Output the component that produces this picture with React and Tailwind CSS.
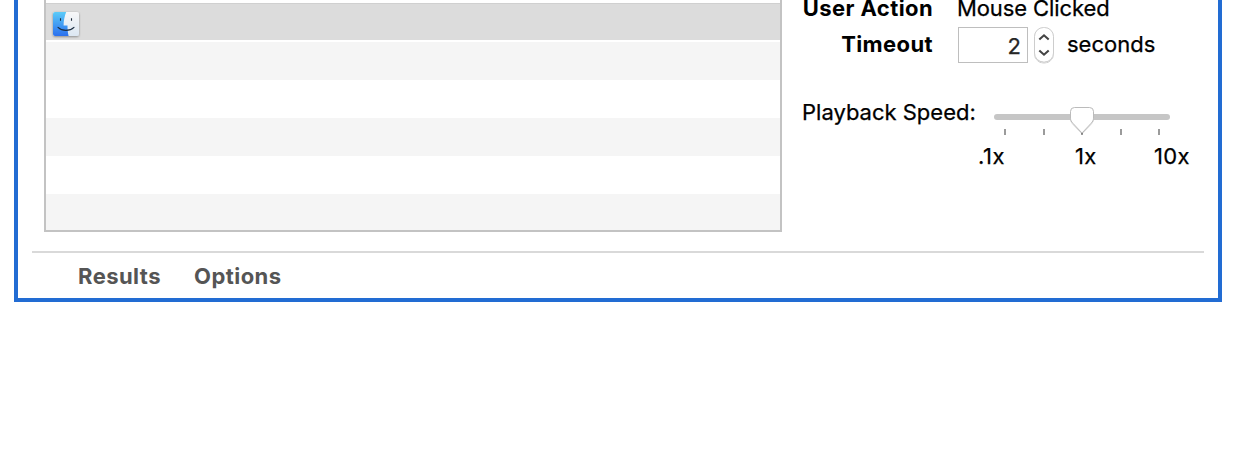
function FinderIcon() {
  return (
    <svg className="block h-[30px] w-[30px]" viewBox="0 0 30 30">
      <defs>
        <linearGradient id="finderBlue" x1="0" y1="0" x2="0" y2="1">
          <stop offset="0" stopColor="#5bcbf8" />
          <stop offset="1" stopColor="#2b70ee" />
        </linearGradient>
        <linearGradient id="finderLight" x1="0" y1="0" x2="0" y2="1">
          <stop offset="0" stopColor="#f7f7f8" />
          <stop offset="1" stopColor="#dce7f2" />
        </linearGradient>
        <filter id="finderShadow" x="-20%" y="-20%" width="140%" height="140%">
          <feDropShadow dx="0" dy="0.8" stdDeviation="0.8" floodOpacity="0.4" />
        </filter>
      </defs>
      <rect x="2" y="2" width="26" height="24" rx="2" fill="url(#finderLight)" filter="url(#finderShadow)" />
      <path d="M15.2 2C13.6 6 12.6 10.5 12.6 15.6H16.5C16.5 19.5 16.8 23 17.6 26H4a2 2 0 0 1-2-2V4a2 2 0 0 1 2-2Z" fill="url(#finderBlue)" />
      <path d="M9.5 8.2v2.6M20.5 8.2v2.6" stroke="#1d2b3a" strokeWidth="1.1" fill="none" />
      <path d="M7 17.3C11.3 21.4 18.7 21.4 23 17.3" stroke="#1a2c40" strokeWidth="1.1" strokeLinecap="round" fill="none" />
    </svg>
  );
}

function Stepper() {
  return (
    <svg className="ml-[3px] block h-[40px] w-[26px]" viewBox="0 0 26 40">
      <defs>
        <filter id="stepShadow" x="-20%" y="-20%" width="140%" height="140%">
          <feDropShadow dx="0" dy="0.8" stdDeviation="0.6" floodOpacity="0.25" />
        </filter>
      </defs>
      <rect x="3.5" y="1.5" width="19" height="34.5" rx="9" fill="#fff" stroke="#cdcdcd" filter="url(#stepShadow)" />
      <path d="M8.3 13.6 13 9.3l4.7 4.3M8.3 24.4l4.7 4.3 4.7-4.3" fill="none" stroke="#444" strokeWidth="2.1" />
    </svg>
  );
}

function Slider() {
  return (
    <svg className="block h-[34px] w-[180px]" viewBox="0 0 180 34">
      <defs>
        <filter id="thumbShadow" x="-20%" y="-20%" width="140%" height="140%">
          <feDropShadow dx="0" dy="0.6" stdDeviation="0.5" floodOpacity="0.25" />
        </filter>
      </defs>
      <rect x="2" y="12" width="176" height="6" rx="3" fill="#c6c6c6" />
      <path d="M13 27v6M52 27v6M90 27v6M129 27v6M167 27v6" stroke="#9b9b9b" strokeWidth="2" />
      <path d="M78.5 9.5a4 4 0 0 1 4-4h15a4 4 0 0 1 4 4v6.8c0 2-1 3.4-2.3 4.9L90 31l-9.2-9.8c-1.3-1.5-2.3-2.9-2.3-4.9Z" fill="#fff" stroke="#bbb" filter="url(#thumbShadow)" />
    </svg>
  );
}

export default function App() {
  return (
    <div className="h-[460px] w-[1236px] overflow-hidden bg-white px-[14px] font-['Inter',sans-serif] text-[22px] leading-[28px] text-black">
      <div className="flex h-[302px] flex-col border-x-4 border-b-4 border-[#226cd3] px-[14px]">
        <div className="flex h-[251px] shrink-0 pl-3">
          <div className="h-[232px] w-[738px] shrink-0 border-x-2 border-b-2 border-[#c3c3c3]">
            <div className="h-[3px]" />
            <div className="flex h-[37px] items-start border-t border-[#d0d0d0] bg-[#dcdcdc] pl-[5px] pt-[6px]">
              <FinderIcon />
            </div>
            <div className="h-[2px] bg-white" />
            <div className="h-[38px] bg-[#f5f5f5]" />
            <div className="h-[38px]" />
            <div className="h-[38px] bg-[#f5f5f5]" />
            <div className="h-[38px]" />
            <div className="h-[36px] bg-[#f5f5f5]" />
          </div>
          <div className="flex w-[422px] flex-col pl-5 whitespace-nowrap">
            <div className="flex h-[22px] font-medium leading-[16px]">
              <span className="w-[131px] text-right font-bold tracking-[0.4px]">User Action</span>
              <span className="ml-[24px] font-normal tracking-[-0.1px] [-webkit-text-stroke:0.25px_black]">Mouse Clicked</span>
            </div>
            <div className="mt-1 flex h-[40px]">
              <span className="w-[131px] pt-1 text-right font-bold tracking-[0.4px]">Timeout</span>
              <div className="ml-[25px] mt-px h-[36px] w-[70px] border border-[#bebebe] pr-[6px] pt-[4px] text-right text-[#262626] [-webkit-text-stroke:0.25px_#262626]">2</div>
              <Stepper />
              <span className="ml-[10px] pt-1 [-webkit-text-stroke:0.25px_black]">seconds</span>
            </div>
            <div className="mt-[32px] flex h-[44px]">
              <span className="w-[190px] [-webkit-text-stroke:0.25px_black]">Playback Speed:</span>
              <div className="pt-[4px]">
                <Slider />
              </div>
            </div>
            <div className="flex h-[28px] [-webkit-text-stroke:0.25px_black]">
              <span className="ml-[176px] w-[97px] tracking-[0.5px]">.1x</span>
              <span className="w-[79px] tracking-[0.3px]">1x</span>
              <span className="tracking-[0.3px]">10x</span>
            </div>
          </div>
        </div>
        <div className="h-[2px] shrink-0 bg-[#d9d9d9]" />
        <div className="flex pl-[46px] pt-[9px] font-bold tracking-[0.45px] text-[#555]">
          <span className="w-[116px]">Results</span>
          <span>Options</span>
        </div>
      </div>
    </div>
  );
}
